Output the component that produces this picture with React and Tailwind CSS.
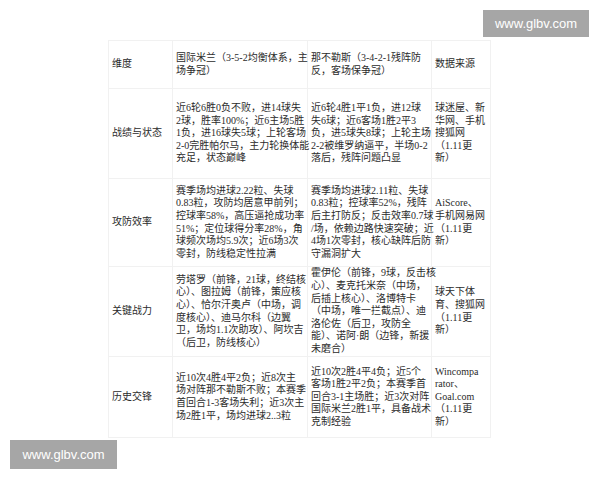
import React from "react";

const rows = [
  {
    label: "战绩与状态",
    h: "h-[90px]",
    inter: [
      "近6轮6胜0负不败，进14球失",
      "2球，胜率100%；近6主场5胜",
      "1负，进16球失5球；上轮客场",
      "2-0完胜帕尔马，主力轮换体能",
      "充足，状态巅峰",
    ],
    napoli: [
      "近6轮4胜1平1负，进12球",
      "失6球；近6客场1胜2平3",
      "负，进5球失8球；上轮主场",
      "2-2被维罗纳逼平，半场0-2",
      "落后，残阵问题凸显",
    ],
    source: ["球迷屋、新", "华网、手机", "搜狐网", "（1.11更", "新）"],
  },
  {
    label: "攻防效率",
    h: "h-[88px]",
    inter: [
      "赛季场均进球2.22粒、失球",
      "0.83粒，攻防均居意甲前列；",
      "控球率58%，高压逼抢成功率",
      "51%；定位球得分率28%，角",
      "球频次场均5.9次；近6场3次",
      "零封，防线稳定性拉满",
    ],
    napoli: [
      "赛季场均进球2.11粒、失球",
      "0.83粒；控球率52%，残阵",
      "后主打防反；反击效率0.7球",
      "/场，依赖边路快速突破；近",
      "4场1次零封，核心缺阵后防",
      "守漏洞扩大",
    ],
    source: ["AiScore、", "手机网易网", "（1.11更", "新）"],
  },
  {
    label: "关键战力",
    h: "h-[90px]",
    inter: [
      "劳塔罗（前锋，21球，终结核",
      "心）、图拉姆（前锋，策应核",
      "心）、恰尔汗奥卢（中场，调",
      "度核心）、迪马尔科（边翼",
      "卫，场均1.1次助攻）、阿坎吉",
      "（后卫，防线核心）",
    ],
    napoli: [
      "霍伊伦（前锋，9球，反击核",
      "心）、麦克托米奈（中场，",
      "后插上核心）、洛博特卡",
      "（中场，唯一拦截点）、迪",
      "洛伦佐（后卫，攻防全",
      "能）、诺阿·朗（边锋，新援",
      "未磨合）",
    ],
    source: ["球天下体", "育、搜狐网", "（1.11更", "新）"],
  },
  {
    label: "历史交锋",
    h: "h-[81px]",
    inter: [
      "近10次4胜4平2负；近8次主",
      "场对阵那不勒斯不败；本赛季",
      "首回合1-3客场失利；近3次主",
      "场2胜1平，场均进球2..3粒",
    ],
    napoli: [
      "近10次2胜4平4负；近5个",
      "客场1胜2平2负；本赛季首",
      "回合3-1主场胜；近3次对阵",
      "国际米兰2胜1平，具备战术",
      "克制经验",
    ],
    source: ["Wincompa", "rator、", "Goal.com", "（1.11更", "新）"],
  },
];

function Lines({ lines }) {
  return (
    <div>
      {lines.map((l, i) => (
        <div key={i} className="whitespace-nowrap">
          {l}
        </div>
      ))}
    </div>
  );
}

const cell = "border border-[#f1f1f1] align-middle px-[3px] py-0 text-left font-normal";

export default function App() {
  return (
    <div className="relative w-[600px] h-[480px] bg-white overflow-hidden">
      <div className="absolute left-[483px] top-[10px] w-[106px] h-[27px] bg-[#a6a6a6] flex items-center justify-center text-white text-[13px] font-['Liberation_Sans',sans-serif]">
        www.glbv.com
      </div>

      <div className="pt-[40px] pl-[108px]">
        <table
          className="table-fixed border-collapse w-[382px] text-[#2b2b2b] text-[10px] leading-[12.6px]"
          style={{ fontFamily: '"Liberation Serif", "Noto Sans CJK SC", serif' }}
        >
          <colgroup>
            <col className="w-[64px]" />
            <col className="w-[135px]" />
            <col className="w-[124px]" />
            <col className="w-[59px]" />
          </colgroup>
          <thead>
            <tr className="h-[48px]">
              <th className={cell}>维度</th>
              <th className={cell}>
                <Lines lines={["国际米兰（3-5-2均衡体系，主", "场争冠）"]} />
              </th>
              <th className={cell}>
                <Lines lines={["那不勒斯（3-4-2-1残阵防", "反，客场保争冠）"]} />
              </th>
              <th className={cell}>数据来源</th>
            </tr>
          </thead>
          <tbody>
            {rows.map((r) => (
              <tr key={r.label} className={r.h}>
                <td className={cell}>{r.label}</td>
                <td className={cell}>
                  <Lines lines={r.inter} />
                </td>
                <td className={cell}>
                  <Lines lines={r.napoli} />
                </td>
                <td className={cell}>
                  <Lines lines={r.source} />
                </td>
              </tr>
            ))}
          </tbody>
        </table>
      </div>

      <div className="absolute left-[10px] top-[440px] w-[107px] h-[29px] bg-[#a6a6a6] flex items-center justify-center text-white text-[13px] font-['Liberation_Sans',sans-serif]">
        www.glbv.com
      </div>
    </div>
  );
}
